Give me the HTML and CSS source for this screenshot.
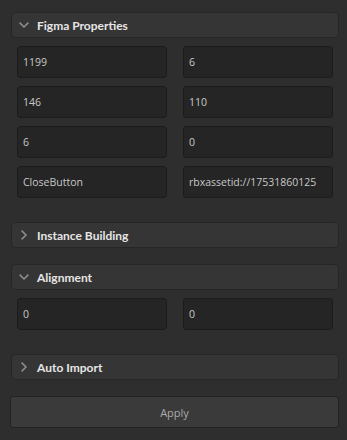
FILE: index.html
```html
<!DOCTYPE html>
<html lang="en">
<head>
    <meta charset="UTF-8">
    <meta name="viewport" content="width=device-width, initial-scale=1.0">
    <title>Figma Import</title>
    <link rel="stylesheet" href="styles.css">
</head>
<body>
    <div class="panel">
        <div class="section open">
            <div class="section-header">
                <svg class="chevron" width="10" height="10" viewBox="0 0 10 10"><path d="M0.6 2.6 L5 7 L9.4 2.6" /></svg>
                <span>Figma Properties</span>
            </div>
            <div class="section-body">
                <div class="field">1199</div>
                <div class="field">6</div>
                <div class="field">146</div>
                <div class="field">110</div>
                <div class="field">6</div>
                <div class="field">0</div>
                <div class="field">CloseButton</div>
                <div class="field">rbxassetid://17531860125</div>
            </div>
        </div>

        <div class="section">
            <div class="section-header">
                <svg class="chevron" width="10" height="10" viewBox="0 0 10 10"><path d="M2.6 0.6 L7 5 L2.6 9.4" /></svg>
                <span>Instance Building</span>
            </div>
        </div>

        <div class="section open">
            <div class="section-header">
                <svg class="chevron" width="10" height="10" viewBox="0 0 10 10"><path d="M0.6 2.6 L5 7 L9.4 2.6" /></svg>
                <span>Alignment</span>
            </div>
            <div class="section-body">
                <div class="field">0</div>
                <div class="field">0</div>
            </div>
        </div>

        <div class="section">
            <div class="section-header">
                <svg class="chevron" width="10" height="10" viewBox="0 0 10 10"><path d="M2.6 0.6 L7 5 L2.6 9.4" /></svg>
                <span>Auto Import</span>
            </div>
        </div>

        <button class="apply">Apply</button>
    </div>
</body>
</html>
```

FILE: styles.css
```css
body {
    margin: 0;
    padding: 0;
    background-color: #2e2e2e;
    font-family: 'Open Sans', sans-serif;
    color: #cccccc;
}
.panel {
    padding: 12px 8px 12px 10px;
}
.section {
    margin: 0 0 16px 1px;
}
.section-header {
    display: flex;
    align-items: center;
    gap: 8px;
    height: 24px;
    padding-left: 7px;
    background-color: #353535;
    border: 1px solid #262626;
    border-radius: 4px;
    color: #e6e6e6;
    font-family: 'Lato', sans-serif;
    font-size: 12px;
    font-weight: 700;
}
.chevron path {
    fill: none;
    stroke: #8e8e8e;
    stroke-width: 1.5;
}
.section-body {
    display: grid;
    grid-template-columns: 1fr 1fr;
    gap: 8px 16px;
    padding: 8px 6px;
}
.field {
    height: 30px;
    line-height: 30px;
    padding-left: 5px;
    background-color: #252525;
    border: 1px solid #1c1c1c;
    border-radius: 3px;
    font-size: 10.5px;
    color: #c8c8c8;
}
.apply {
    display: block;
    width: 100%;
    height: 32px;
    margin: 0;
    background-color: #3a3a3a;
    border: 1px solid #222222;
    border-radius: 3px;
    color: #aaaaaa;
    font-family: 'Open Sans', sans-serif;
    font-size: 11px;
}
```
